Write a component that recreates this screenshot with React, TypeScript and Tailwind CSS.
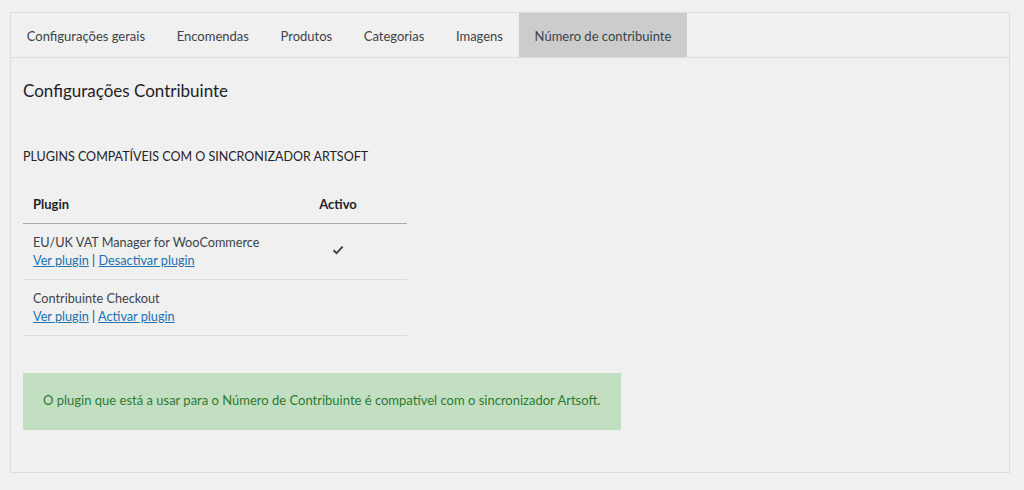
const tabs = [
  'Configurações gerais',
  'Encomendas',
  'Produtos',
  'Categorias',
  'Imagens',
  'Número de contribuinte',
]

const plugins = [
  { name: 'EU/UK VAT Manager for WooCommerce', action: 'Desactivar plugin', active: true },
  { name: 'Contribuinte Checkout', action: 'Activar plugin', active: false },
]

function Check() {
  return (
    <svg width="12" height="10" viewBox="0 0 12 10" className="text-[#3c434a]">
      <path d="M1.5 5.2 L4.6 8.2 L10.6 1.6" fill="none" stroke="currentColor" strokeWidth="1.9" />
    </svg>
  )
}

export default function App() {
  return (
    <div
      className="min-h-screen bg-[#f0f0f0] px-[10px] pt-[12px] text-[13px] text-[#3c434a]"
      style={{ fontFamily: 'Lato, "Noto Sans", sans-serif' }}
    >
      <div className="h-[461px] w-[1000px] border border-[#dcdcde]">
        <div className="flex h-[45px] border-b border-[#dcdcde]">
          {tabs.map((t, i) => (
            <div
              key={t}
              className={
                i === tabs.length - 1
                  ? 'flex items-center bg-[#cccccc] px-[15.8px] pt-[3px]'
                  : 'flex items-center px-[15.8px] pt-[3px]'
              }
            >
              {t}
            </div>
          ))}
        </div>

        <div className="px-[12px]">
          <h2 className="mt-[22px] text-[17px] leading-[22px] text-[#1d2327]">Configurações Contribuinte</h2>

          <h3 className="mt-[47px] text-[12.5px] leading-[16px] uppercase text-[#1d2327]">
            Plugins compatíveis com o sincronizador Artsoft
          </h3>

          <table className="mt-[21px] w-[384px] border-collapse">
            <thead>
              <tr className="border-b border-[#a7aaad]">
                <th className="h-[37px] pl-[10px] text-left font-bold text-[#1d2327]">Plugin</th>
                <th className="w-[138px] text-center font-bold text-[#1d2327]">Activo</th>
              </tr>
            </thead>
            <tbody>
              {plugins.map((p) => (
                <tr key={p.name} className="border-b border-[#dcdcde]">
                  <td className="h-[56px] pl-[10px] text-[12.7px] leading-[18px]">
                    <div>{p.name}</div>
                    <div>
                      <a className="cursor-pointer text-[#2271b1] underline">Ver plugin</a> |{' '}
                      <a className="cursor-pointer text-[#2271b1] underline">{p.action}</a>
                    </div>
                  </td>
                  <td className="text-center">
                    {p.active && (
                      <span className="inline-flex pt-[2px]">
                        <Check />
                      </span>
                    )}
                  </td>
                </tr>
              ))}
            </tbody>
          </table>

          <div className="mt-[37px] flex h-[57px] w-[598px] items-center bg-[#c3dfc2] px-[20px] text-[#2c7a2f]">
            O plugin que está a usar para o Número de Contribuinte é compatível com o sincronizador Artsoft.
          </div>
        </div>
      </div>
    </div>
  )
}
